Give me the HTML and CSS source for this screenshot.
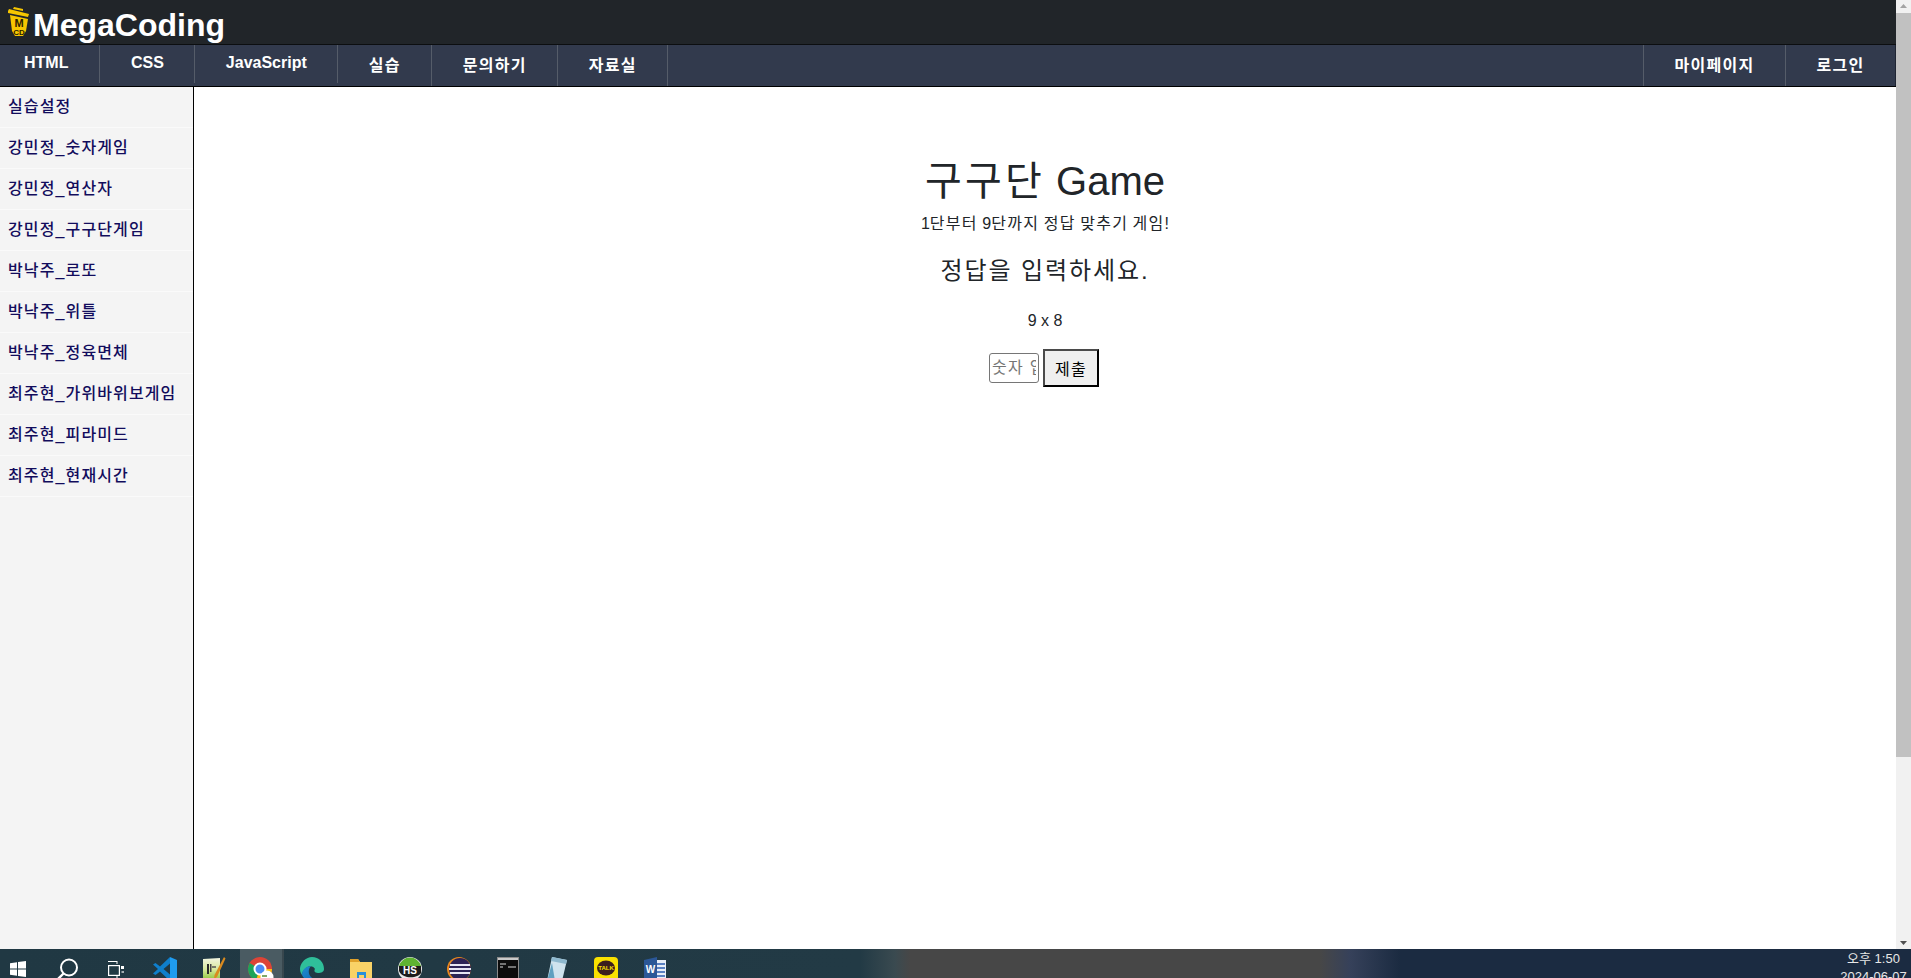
FILE: index.html
```html
<!DOCTYPE html>
<html lang="ko">
<head>
    <meta charset="UTF-8">
    <meta name="viewport" content="width=device-width, initial-scale=1.0">
    <title>MegaCoding</title>
    <link rel="stylesheet" href="styles.css">
</head>
<body>
    <div class="screen">
        <div class="page">
            <header class="top-bar">
                <svg class="logo-icon" viewBox="0 0 21 30" width="21" height="30">
                    <path d="M5 2 L6 0 L15 2 L15 4 Z" fill="#f6c600"/>
                    <path d="M0 4 L1 2 L21 7 L20 10 L0 6 Z" fill="#f6c600"/>
                    <path d="M2 8 L20 12 L18 24 L15 29 L7 29 L4 24 Z" fill="#f6c600"/>
                    <text x="11" y="20" text-anchor="middle" class="logo-m">M</text>
                    <text x="11" y="28" text-anchor="middle" class="logo-cd">CD</text>
                </svg>
                <span class="logo-text">MegaCoding</span>
            </header>
            <nav class="main-nav">
                <a class="nav-item nav-first nav-short">HTML</a>
                <a class="nav-item nav-short">CSS</a>
                <a class="nav-item nav-short">JavaScript</a>
                <a class="nav-item ko">실습</a>
                <a class="nav-item ko">문의하기</a>
                <a class="nav-item ko">자료실</a>
                <span class="nav-space"></span>
                <a class="nav-item nav-left ko">마이페이지</a>
                <a class="nav-item nav-left ko">로그인</a>
            </nav>
            <div class="content-wrap">
                <aside class="sidebar">
                    <a class="side-link ko">실습설정</a>
                    <a class="side-link ko">강민정_숫자게임</a>
                    <a class="side-link ko">강민정_연산자</a>
                    <a class="side-link ko">강민정_구구단게임</a>
                    <a class="side-link ko">박낙주_로또</a>
                    <a class="side-link ko">박낙주_위틀</a>
                    <a class="side-link ko">박낙주_정육면체</a>
                    <a class="side-link ko">최주현_가위바위보게임</a>
                    <a class="side-link ko">최주현_피라미드</a>
                    <a class="side-link ko">최주현_현재시간</a>
                </aside>
                <main class="game">
                    <h1><span class="ko">구구단</span> Game</h1>
                    <p class="game-desc">1<span class="ko">단부터</span> 9<span class="ko">단까지</span> <span class="ko">정답</span> <span class="ko">맞추기</span> <span class="ko">게임</span>!</p>
                    <h3 class="ko">정답을 입력하세요.</h3>
                    <p class="question">9 x 8</p>
                    <form class="answer-form">
                        <input type="text" class="answer-input ko" placeholder="숫자 입력">
                        <button type="button" class="answer-btn ko">제출</button>
                    </form>
                </main>
            </div>
        </div>
        <div class="scrollbar">
            <svg class="scroll-arrow" viewBox="0 0 15 13" width="15" height="13"><path d="M4 8 L7.5 4 L11 8 Z" fill="#a3a3a3"/></svg>
            <div class="scroll-track"><div class="scroll-thumb"></div></div>
            <svg class="scroll-arrow" viewBox="0 0 15 13" width="15" height="13"><path d="M4 5 L11 5 L7.5 9 Z" fill="#505050"/></svg>
        </div>
    </div>
    <footer class="taskbar">
        <div class="task-icons">
            <span class="task-item">
                <svg viewBox="0 0 16 24" width="16" height="24"><path d="M0 6.3 L7 5.3 V11.5 H0 Z M8 5.1 L16 4 V11.5 H8 Z M0 12.5 H7 V18.7 L0 17.7 Z M8 12.5 H16 V20 L8 18.9 Z" fill="#fff"/></svg>
            </span>
            <span class="task-item">
                <svg viewBox="0 0 24 24" width="24" height="24"><circle cx="14" cy="10.500" r="8" fill="none" stroke="#fff" stroke-width="2"/><path d="M8.500 16.500 L3 22" stroke="#fff" stroke-width="2.400"/></svg>
            </span>
            <span class="task-item">
                <svg viewBox="0 0 16 24" width="16" height="24"><path d="M0 4.500 H9 M0 21.500 H9" stroke="#fff" stroke-width="1.200"/><path d="M9 4 V7 M9 19 V22" stroke="#fff"/><rect x="0.600" y="8.600" width="10.800" height="9.800" fill="none" stroke="#fff" stroke-width="1.200"/><rect x="13" y="9" width="3" height="3" fill="#fff"/><path d="M13.500 15 H16" stroke="#fff" stroke-width="1.200"/></svg>
            </span>
            <span class="task-item">
                <svg viewBox="0 0 24 24" width="24" height="24"><path d="M17 0 L7 9.500 L2.500 6 L0 7.500 L5 12 L0 16.500 L2.500 18 L7 14.500 L17 24 V17.500 L10.500 12 L17 6.500 Z" fill="#0f7fcc"/><path d="M17 0 L24 3 V21 L17 24 Z" fill="#1f9cf0"/></svg>
            </span>
            <span class="task-item">
                <svg viewBox="0 0 24 24" width="24" height="24"><defs><linearGradient id="npp" x1="0" y1="0" x2="0" y2="1"><stop offset="0" stop-color="#f2f5e0"/><stop offset=".5" stop-color="#d6e89a"/><stop offset="1" stop-color="#86c232"/></linearGradient></defs><path d="M1 2 L18 1 V24 H1 Z" fill="url(#npp)"/><rect x="5" y="7" width="2" height="10" fill="#2b2b2b"/><rect x="8" y="7" width="1.500" height="8" fill="#444"/><path d="M10 10 H14" stroke="#555" stroke-width="1.500"/><path d="M22 0 L23.500 1.500 L15 20 L12 22 L12.500 18 Z" fill="#d98a1f"/></svg>
            </span>
            <span class="task-item task-active">
                <svg viewBox="0 0 26 26" width="26" height="26"><circle cx="12" cy="12" r="12" fill="#dd4437"/><path d="M12 12 L1.600 6 A12 12 0 0 0 8 23.300 Z" fill="#1da45a"/><path d="M12 12 H24 A12 12 0 0 1 8 23.300 Z" fill="#fbc116"/><circle cx="12" cy="12" r="5.500" fill="#4b8bf5" stroke="#fff" stroke-width="2"/><circle cx="19" cy="20" r="6.500" fill="#fff"/><rect x="14" y="18" width="5" height="2" fill="#7fa86a"/></svg>
            </span>
            <span class="task-item">
                <svg viewBox="0 0 24 24" width="24" height="24"><defs><linearGradient id="edge" x1="0" y1="0" x2="1" y2="1"><stop offset="0" stop-color="#1f8fd0"/><stop offset="1" stop-color="#0f5fb0"/></linearGradient></defs><path d="M12 0 C19 0 24 5 24 12 C24 15 21 16 18 16 C14 16 14 13 15 12 C14 9 9 8 6 11 C3 13 2 16 2 18 C0 15 0 13 0 11 C1 5 6 0 12 0 Z" fill="#2fbf9a"/><path d="M2 18 C2 12 7 9 11 9 C8 12 8 17 11 20 C14 23 19 23 21 21 C18 24 14 25 11 24 C7 24 3 21 2 18 Z" fill="url(#edge)"/></svg>
            </span>
            <span class="task-item">
                <svg viewBox="0 0 22 24" width="22" height="24"><path d="M0 2 H8 L10 5 H22 V24 H0 Z" fill="#f9d267"/><path d="M0 2 H8 L10 5 H0 Z" fill="#e0a12a"/><rect x="7" y="15" width="9" height="9" fill="#2a8fd8"/><rect x="9" y="18" width="5" height="6" fill="#f9d267"/></svg>
            </span>
            <span class="task-item">
                <svg viewBox="0 0 24 24" width="24" height="24"><circle cx="12" cy="12" r="12" fill="#e8e8e8"/><path d="M12 0.500 A11.500 11.500 0 0 1 23 9 H1 A11.500 11.500 0 0 1 12 0.500 Z" fill="#5fb332"/><path d="M1 9 H23 V16 C21 19 16 21 9 20 C5 19 2 17 1 14 Z" fill="#1c1c1c"/><text x="12" y="17" text-anchor="middle" class="hs-mark">HS</text></svg>
            </span>
            <span class="task-item">
                <svg viewBox="0 0 24 24" width="24" height="24"><circle cx="12" cy="12" r="12" fill="#e8871e"/><circle cx="13" cy="12" r="11" fill="#2c2255"/><path d="M3 8 H23 M2 12 H24 M3 16 H23" stroke="#e6e4f2" stroke-width="2"/></svg>
            </span>
            <span class="task-item">
                <svg viewBox="0 0 22 24" width="22" height="24"><rect x="0.500" y="0.500" width="21" height="23" fill="#0c0c0c" stroke="#8a8a8a"/><rect x="1" y="1" width="20" height="2" fill="#c9c9c9"/><path d="M3 7 H9 M3 10 H6 M11 10 H19" stroke="#dcdcdc"/></svg>
            </span>
            <span class="task-item">
                <svg viewBox="0 0 22 24" width="22" height="24"><path d="M6 0 L21 3 L16 24 H1 Z" fill="#cfe3ee"/><path d="M6 0 L21 3 L20 7 L5 4 Z" fill="#8fb9cf"/><path d="M1 24 L6 6 L9 24 Z" fill="#5fa0c0"/></svg>
            </span>
            <span class="task-item">
                <svg viewBox="0 0 24 24" width="24" height="24"><rect width="24" height="24" rx="4" fill="#fae100"/><ellipse cx="12" cy="11" rx="9" ry="7.500" fill="#3c1e1e"/><text x="12" y="13" text-anchor="middle" class="talk-mark">TALK</text></svg>
            </span>
            <span class="task-item">
                <svg viewBox="0 0 22 24" width="22" height="24"><rect x="6" y="3" width="16" height="21" fill="#e8eef8"/><path d="M12 7 H21 M12 11 H21 M12 15 H21 M12 19 H21" stroke="#2b5cb0" stroke-width="1.600"/><path d="M0 3 L13 0 V24 L0 22 Z" fill="#2b5797"/><text x="6.500" y="16" text-anchor="middle" class="word-mark">W</text></svg>
            </span>
        </div>
        <div class="clock">
            <div>오후 1:50</div>
            <div>2024-06-07</div>
        </div>
    </footer>
</body>
</html>
```

FILE: styles.css
```css
* {
    box-sizing: border-box;
}
html, body {
    height: 100%;
}
body {
    margin: 0;
    overflow: hidden;
    font-family: "Liberation Sans", "Noto Sans CJK KR", sans-serif;
    color: #212529;
    background: #fff;
    display: flex;
    flex-direction: column;
}
/* hangul in the reference is a full em wide, Noto is .92 */
.ko {
    letter-spacing: .08em;
}
.screen {
    height: 949px;
    display: flex;
}
.page {
    flex: 1;
    min-width: 0;
    display: flex;
    flex-direction: column;
}

/* top */
.top-bar {
    height: 45px;
    background: #212529;
    border-bottom: 1px solid #0c0e10;
    display: flex;
    align-items: flex-start;
    padding: 7px 0 0 8px;
    overflow: hidden;
}
.logo-icon {
    display: block;
}
.logo-m {
    font-size: 11px;
    font-weight: bold;
    fill: #2a2000;
}
.logo-cd {
    font-size: 8px;
    font-weight: bold;
    fill: #2a2000;
}
.logo-text {
    margin: 0 0 0 4px;
    font-size: 32px;
    line-height: 37px;
    font-weight: bold;
    color: #fff;
}
.main-nav {
    height: 42px;
    background: #323a4d;
    border-bottom: 1px solid #000;
    display: flex;
    align-items: flex-start;
    font-size: 16px;
    color: #fff;
}
.nav-item {
    height: 41px;
    line-height: 24px;
    padding: 9px 30.5px 0;
    border-right: 1px solid #555c69;
    font-weight: bold;
    white-space: nowrap;
    text-align: center;
}
.nav-short {
    height: 38px;
    padding-top: 6px;
}
.nav-first {
    padding-left: 24px;
    padding-right: 31px;
}
.nav-space {
    flex: 1;
}
.nav-left {
    border-left: 1px solid #555c69;
    border-right: none;
}
.nav-left + .nav-left {
    border-right: 1px solid #1f2533;
}

/* sidebar + game */
.content-wrap {
    flex: 1;
    display: flex;
    min-height: 0;
}
.sidebar {
    width: 194px;
    background: #f4f4f4;
    border-right: 1px solid #000;
    display: flex;
    flex-direction: column;
}
.side-link {
    height: 41px;
    padding-left: 8px;
    line-height: 39px;
    font-size: 16px;
    font-weight: 500;
    color: #120c5c;
    border-bottom: 1px solid #fafafa;
    white-space: nowrap;
    letter-spacing: .07em;
}
.game {
    flex: 1;
    text-align: center;
    padding-top: 70px;
}
.game h1 {
    margin: 0 0 7px;
    font-size: 40px;
    font-weight: normal;
    line-height: 48px;
}
.game-desc {
    margin: 0 0 20px;
    font-size: 16px;
    line-height: 24px;
}
.game h3 {
    margin: 0 0 24px;
    font-size: 24px;
    font-weight: normal;
    line-height: 29px;
}
.question {
    margin: 0 0 16px;
    font-size: 16px;
    line-height: 24px;
}
.answer-form {
    display: flex;
    justify-content: center;
    align-items: center;
    gap: 4px;
    padding-right: 2px;
}
.answer-input {
    width: 50px;
    height: 30px;
    padding: 1px 2px;
    border: 1px solid #767676;
    border-radius: 3px;
    font: inherit;
    font-size: 16px;
}
.answer-input::placeholder {
    color: #757575;
}
.answer-btn {
    width: 56px;
    height: 38px;
    padding: 0;
    background: #efefef;
    color: #000;
    font: inherit;
    font-size: 16px;
    border: 2px solid;
    border-color: #4a4a4a #000 #000 #4a4a4a;
}

/* fake scrollbar */
.scrollbar {
    width: 15px;
    background: #f1f1f1;
    display: flex;
    flex-direction: column;
}
.scroll-arrow {
    display: block;
    flex: none;
}
.scroll-track {
    flex: 1;
}
.scroll-thumb {
    height: 744px;
    background: #c1c1c1;
}

/* windows taskbar */
.taskbar {
    height: 29px;
    overflow: hidden;
    color: #e8e8e8;
    background: linear-gradient(to right, #203843 0, #223a45 860px, #3a4a50 895px, #474747 910px, #474747 1320px, #36415a 1350px, #1b2b41 1400px, #1b2b41 100%);
    display: flex;
    justify-content: space-between;
}
.task-icons {
    display: flex;
    margin-left: -7px;
}
.task-item {
    width: 49px;
    height: 29px;
    padding-top: 8px;
    display: flex;
    justify-content: center;
    align-items: flex-start;
}
.task-item svg {
    flex: none;
}
.task-active {
    width: 44px;
    margin: 0 3px 0 2px;
    background: #4a5b62;
    border-right: 2px solid #38474e;
}
.hs-mark {
    font-size: 10px;
    font-weight: bold;
    fill: #fff;
}
.talk-mark {
    font-size: 6px;
    font-weight: bold;
    fill: #fae100;
}
.word-mark {
    font-size: 10px;
    font-weight: bold;
    fill: #fff;
}
.clock {
    width: 71px;
    padding-top: 1px;
    margin-right: 2px;
    font-size: 13px;
    line-height: 18px;
    text-align: center;
    white-space: nowrap;
}
```
